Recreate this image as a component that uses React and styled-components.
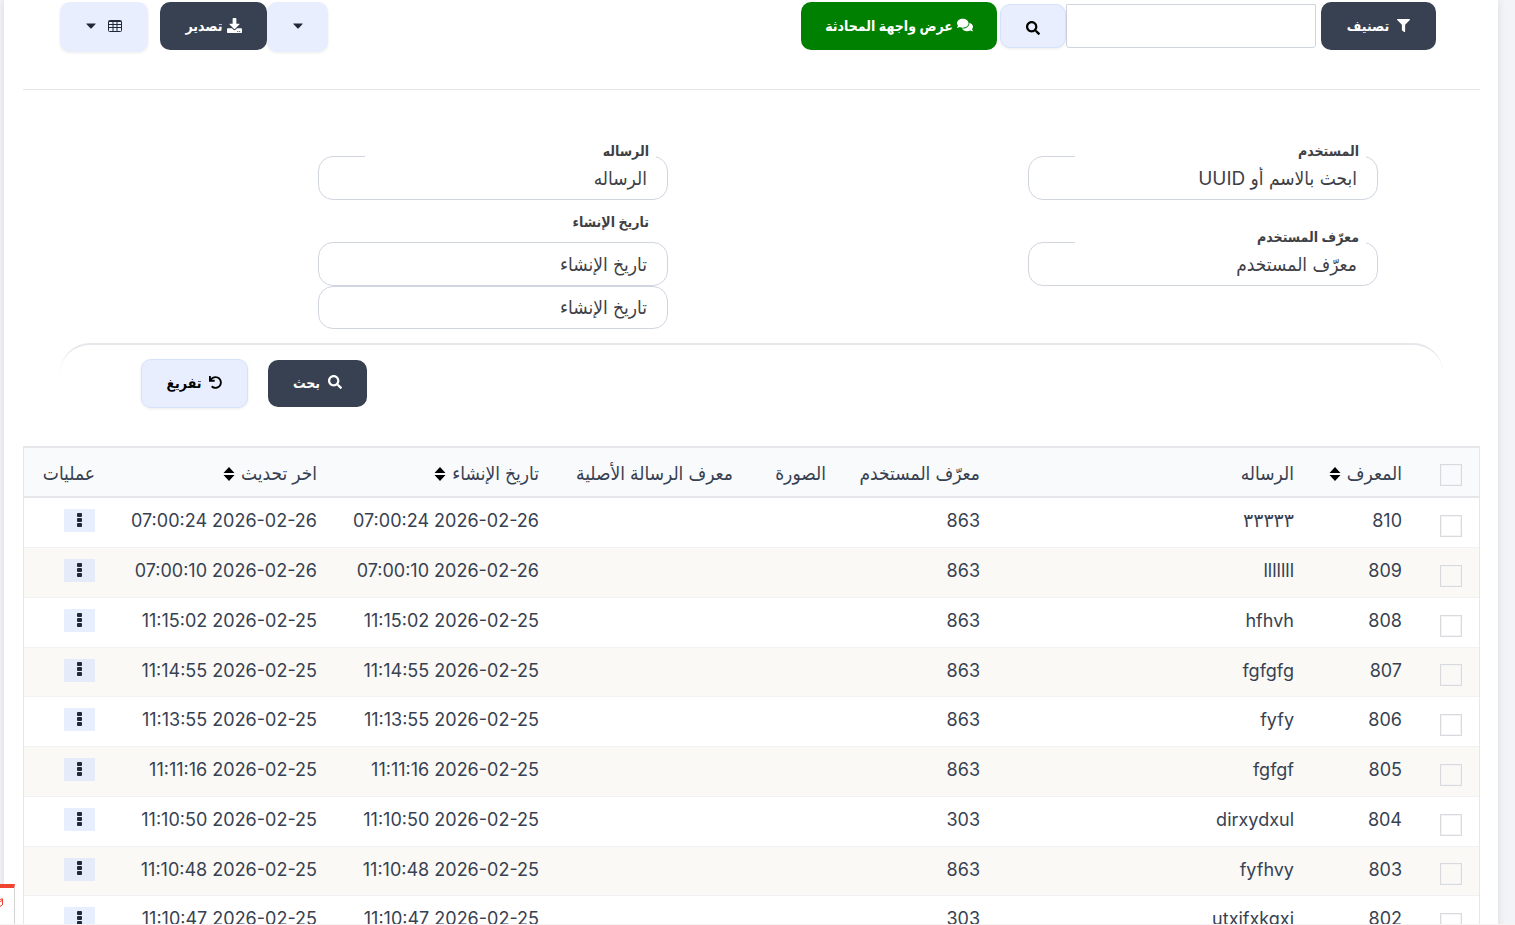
import React from "react";
import styled, { createGlobalStyle, css } from "styled-components";
import { FaFilter, FaSearch, FaComments, FaDownload, FaUndo } from "react-icons/fa";

const GlobalStyle = createGlobalStyle`
  *, *::before, *::after { box-sizing: border-box; }
  html { height: 100%; overflow: hidden; }
  body {
    margin: 0;
    height: 100%;
    overflow: hidden;
    background: #f3f4f7;
    color: #374151;
    font-family: Inter, "DejaVu Sans Condensed", "DejaVu Sans", sans-serif;
    font-size: 18px;
  }
  button, input { font-family: inherit; }
`;

const Card = styled.main`
  margin: 0 17px 0 4px;
  padding: 0 18px 0 19px;
  background: #fff;
  box-shadow: 0 0 8px rgba(40, 45, 60, 0.12);
`;

const Toolbar = styled.header`
  display: flex;
  justify-content: space-between;
  align-items: flex-start;
  height: 90px;
  padding: 2px 44px 0 37px;
  border-bottom: 1px solid #e5e7eb;
`;

const Group = styled.div`
  display: flex;
  align-items: ${(p) => p.$align || "center"};
  gap: ${(p) => p.$gap || 0}px;
`;

const tones = {
  dark: css`background: #374151; color: #fff; border: 0;`,
  green: css`background: #008000; color: #fff; border: 0;`,
  light: css`background: #e8eefd; color: #000; border: 1px solid #d6e2fb; box-shadow: 0 1px 3px rgba(0, 0, 0, 0.08);`,
  soft: css`background: #e8eefd; color: #1f2937; border: 0; box-shadow: 0 1px 3px rgba(0, 0, 0, 0.08);`,
};

const Button = styled.button`
  display: inline-flex;
  align-items: center;
  justify-content: center;
  gap: ${(p) => p.$gap || 4}px;
  width: ${(p) => p.$width}px;
  height: ${(p) => p.$height || 48}px;
  padding: ${(p) => (p.$iconOnly ? "4px 0 0" : "0 0 2px")};
  border-radius: 10px;
  font-size: 14px;
  font-weight: 600;
  white-space: nowrap;
  cursor: pointer;
  ${(p) => tones[p.$tone]}
`;

const SearchBox = styled.input`
  width: 250px;
  height: 44px;
  padding: 0 12px;
  border: 1px solid #d1d5e0;
  border-radius: 0 0 3px 3px;
  background: #fff;
  font-size: 16px;
`;

const SearchGroup = styled.div`
  display: flex;
  margin-right: 2px;
`;

const Filters = styled.section`
  display: grid;
  grid-template-columns: 350px 350px;
  justify-content: space-between;
  align-items: start;
  padding: 51px 102px 0 295px;
`;

const Column = styled.div`
  display: flex;
  flex-direction: column;
  gap: ${(p) => p.$gap}px;
`;

const Field = styled.div`
  display: flex;
  flex-direction: column;
`;

const FieldLabel = styled.label`
  position: relative;
  width: 291px;
  height: 20px;
  margin: 0 12px ${(p) => (p.$above ? 10 : -5)}px 0;
  padding: 0 7px;
  background: #fff;
  color: #3f3f46;
  font-size: 14px;
  font-weight: 600;
  line-height: 20px;
`;

const FieldInput = styled.input`
  width: 100%;
  height: ${(p) => p.$height || 44}px;
  padding: 0 20px;
  border: 1px solid #d1d5e0;
  border-radius: 15px;
  background: #fff;
  color: #3f3f46;
  font-size: 19px;
  font-variation-settings: "opsz" 32;
  &::placeholder { color: #3f3f46; opacity: 1; }
`;

const Actions = styled.div`
  display: flex;
  align-items: center;
  justify-content: flex-end;
  gap: 20px;
  height: 103px;
  margin: 14px 37px 0;
  padding: 0 0 25px 81px;
  border-top: 2px solid #e5e7eb;
  border-radius: 30px 30px 0 0;
`;

const Table = styled.table`
  width: 100%;
  table-layout: fixed;
  border-collapse: separate;
  border-spacing: 0;
  border: 1px solid #e5e7eb;
  border-top: 2px solid #e5e7eb;
`;

const HeadCell = styled.th`
  height: 50px;
  padding: 4px ${(p) => (p.$check ? 17 : 18)}px 0 0;
  border-bottom: 2px solid #e5e7eb;
  background: #f9fafc;
  font-size: 19px;
  font-weight: 500;
  line-height: 24px;
  text-align: right;
  white-space: nowrap;
`;

const Cell = styled.td`
  height: 50px;
  padding: 0 ${(p) => (p.$check ? 17 : 18)}px 4px 0;
  border-bottom: 1px solid #f1f2f4;
  font-variation-settings: "opsz" 32;
  text-align: right;
  white-space: nowrap;
`;

const Row = styled.tr`
  &:nth-child(even) { background: #faf9f6; }
  &:nth-child(4n) > td { height: 49px; }
`;

const Message = styled.span`
  font-family: Inter, "DejaVu Sans", sans-serif;
  font-size: ${(p) => (p.lang === "ar" ? 19 : 18)}px;
  line-height: 20px;
`;

const CheckBox = styled.input`
  appearance: none;
  display: block;
  width: 22px;
  height: 22px;
  margin: ${(p) => (p.$head ? 2 : 10)}px 0 0;
  border: 1px solid #d9dadd;
  box-shadow: inset 0 0 0 1px #f3f4f6;
`;

const SortButton = styled.button`
  display: inline-flex;
  align-items: center;
  gap: 6px;
  padding: 0;
  border: 0;
  background: none;
  color: inherit;
  font-size: inherit;
  font-weight: inherit;
  line-height: inherit;
`;

const MenuButton = styled.button`
  display: flex;
  align-items: center;
  justify-content: center;
  width: 31px;
  height: 23px;
  padding: 0;
  border: 0;
  background: rgba(208, 222, 251, 0.5);
  color: #1f2937;
`;

const DebugTab = styled.aside`
  position: fixed;
  left: 0;
  bottom: 0;
  width: 15px;
  height: 41px;
  padding-top: 10px;
  border-top: 4px solid #f04430;
  border-right: 1px solid #d4d4d4;
  background: #fff;
  direction: ltr;
  line-height: 0;
`;

const DebugLine = styled.div`
  position: fixed;
  left: 0;
  right: 0;
  bottom: 0;
  height: 1px;
  background: #f7f3f2;
`;

const SortIcon = () => (
  <svg width="12" height="16" viewBox="0 0 12 16" fill="#000" aria-hidden="true">
    <path d="M6 1 11.5 7H.5zM6 15 .5 9h11z" />
  </svg>
);

const CaretIcon = () => (
  <svg width="10" height="6" viewBox="0 0 10 6" fill="currentColor" aria-hidden="true">
    <path d="M.6.5h8.8q.6.1.2.6L5.4 5.4q-.4.3-.8 0L.4 1.100Q0 .6.6.5z" />
  </svg>
);

const TableIcon = () => (
  <svg width="14" height="12" viewBox="0 0 14 12" aria-hidden="true">
    <rect x=".5" y=".5" width="13" height="11" rx="1" fill="none" stroke="currentColor" />
    <path d="M1 1.500h12M1 4.500h12M1 7.500h12M5 2v9.500M9 2v9.500" fill="none" stroke="currentColor" />
  </svg>
);

const DotsIcon = () => (
  <svg width="5" height="16" viewBox="0 0 5 16" fill="currentColor" aria-hidden="true">
    <rect x="0" y="0" width="5" height="4" rx="1" />
    <rect x="0" y="5" width="5" height="4" rx="1" />
    <rect x="0" y="10" width="5" height="4" rx="1" />
  </svg>
);

const columns = [
  { width: 59, check: true },
  { width: 108, label: "المعرف", sort: true },
  { width: 314, label: "الرساله" },
  { width: 154, label: "معرّف المستخدم" },
  { width: 93, label: "الصورة" },
  { width: 194, label: "معرف الرسالة الأصلية" },
  { width: 222, label: "تاريخ الإنشاء", sort: true },
  { width: 222, label: "اخر تحديث", sort: true },
  { width: 89, label: "عمليات" },
];

const rows = [
  ["810", "٣٣٣٣٣", "863", "2026-02-26 07:00:24"],
  ["809", "lllllll", "863", "2026-02-26 07:00:10"],
  ["808", "hfhvh", "863", "2026-02-25 11:15:02"],
  ["807", "fgfgfg", "863", "2026-02-25 11:14:55"],
  ["806", "fyfy", "863", "2026-02-25 11:13:55"],
  ["805", "fgfgf", "863", "2026-02-25 11:11:16"],
  ["804", "dirxydxul", "303", "2026-02-25 11:10:50"],
  ["803", "fyfhvy", "863", "2026-02-25 11:10:48"],
  ["802", "utxifxkgxj", "303", "2026-02-25 11:10:47"],
];

const TextField = ({ id, label, placeholder }) => (
  <Field>
    <FieldLabel htmlFor={id}>{label}</FieldLabel>
    <FieldInput id={id} placeholder={placeholder || label} />
  </Field>
);

export default function App() {
  return (
    <div dir="rtl" lang="ar">
      <GlobalStyle />
      <Card>
        <Toolbar>
          <Group $gap={3}>
            <Button $tone="dark" $width={115} $gap={8}><FaFilter size={13} />تصنيف</Button>
            <SearchGroup>
              <SearchBox type="search" aria-label="بحث" />
              <Button $tone="light" $width={66} $height={44} $iconOnly aria-label="بحث"><FaSearch size={14} /></Button>
            </SearchGroup>
            <Button $tone="green" $width={196}><FaComments size={16} />عرض واجهة المحادثة</Button>
          </Group>
          <Group $gap={12} $align="flex-start">
            <Group $align="flex-start">
              <Button $tone="soft" $width={61} $height={50} aria-label="خيارات التصدير"><CaretIcon /></Button>
              <Button $tone="dark" $width={107}><FaDownload size={15} />تصدير</Button>
            </Group>
            <Button $tone="soft" $width={88} $height={50} $gap={12} aria-label="الأعمدة"><TableIcon /><CaretIcon /></Button>
          </Group>
        </Toolbar>

        <Filters>
          <Column $gap={27}>
            <TextField id="user" label="المستخدم" placeholder="ابحث بالاسم أو UUID" />
            <TextField id="user-id" label="معرّف المستخدم" />
          </Column>
          <Column $gap={12}>
            <TextField id="message" label="الرساله" />
            <Field>
              <FieldLabel htmlFor="created-from" $above>تاريخ الإنشاء</FieldLabel>
              <FieldInput id="created-from" placeholder="تاريخ الإنشاء" />
              <FieldInput $height={43} aria-label="تاريخ الإنشاء" placeholder="تاريخ الإنشاء" />
            </Field>
          </Column>
        </Filters>

        <Actions>
          <Button $tone="dark" $width={99} $height={47} $gap={8}><FaSearch size={14} />بحث</Button>
          <Button $tone="light" $width={107} $height={49} $gap={8}><FaUndo size={13} />تفريغ</Button>
        </Actions>

        <Table>
          <colgroup>
            {columns.map((c, i) => <col key={i} width={c.width} />)}
          </colgroup>
          <thead>
            <tr>
              {columns.map((c, i) => (
                <HeadCell key={i} scope="col" $check={c.check}>
                  {c.check && <CheckBox $head type="checkbox" aria-label="تحديد الكل" />}
                  {c.sort ? <SortButton>{c.label}<SortIcon /></SortButton> : c.label}
                </HeadCell>
              ))}
            </tr>
          </thead>
          <tbody>
            {rows.map(([id, message, user, date]) => (
              <Row key={id}>
                <Cell $check><CheckBox type="checkbox" aria-label={id} /></Cell>
                <Cell>{id}</Cell>
                <Cell><Message lang={/[a-z]/.test(message) ? "en" : "ar"}>{message}</Message></Cell>
                <Cell>{user}</Cell>
                <Cell />
                <Cell />
                <Cell>{date}</Cell>
                <Cell>{date}</Cell>
                <Cell><MenuButton aria-label="عمليات"><DotsIcon /></MenuButton></Cell>
              </Row>
            ))}
          </tbody>
        </Table>
      </Card>
      <DebugTab>
        <svg width="4" height="10" viewBox="0 0 4 10" fill="none" stroke="#f04430" aria-hidden="true">
          <path d="M0 1.500 2.500.8v6L0 8.500M0 3.500l2.500-1" />
        </svg>
      </DebugTab>
      <DebugLine />
    </div>
  );
}
